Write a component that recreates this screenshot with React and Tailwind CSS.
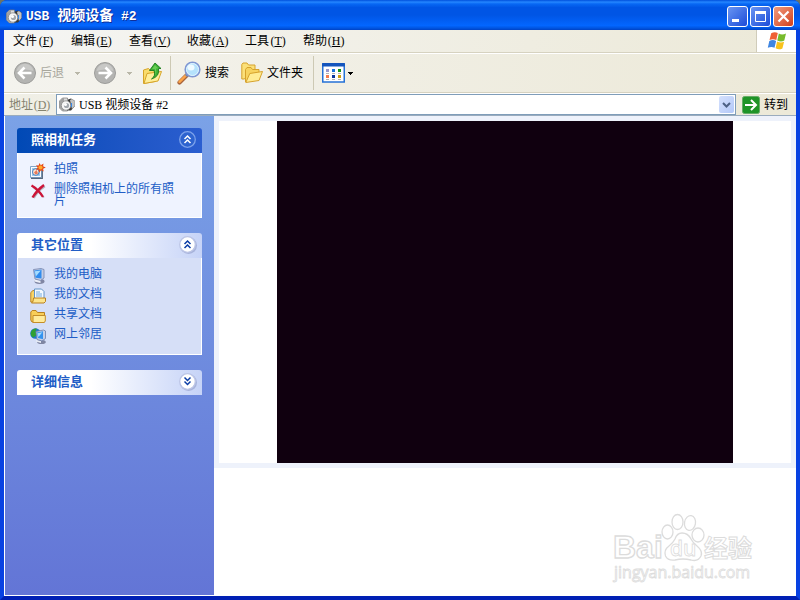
import React from "react";

const MENUS = [
  ["文件", "F"],
  ["编辑", "E"],
  ["查看", "V"],
  ["收藏", "A"],
  ["工具", "T"],
  ["帮助", "H"],
];

function CameraIcon() {
  return (
    <svg width="16" height="16" viewBox="0 0 16 16" aria-hidden="true" className="shrink-0">
      <path d="M.5 4l3-3h5v13h-5l-3-3z" fill="#dcdcdc" stroke="#777" strokeWidth="0.7" />
      <path d="M.8 4l2.700-3H5v13H3.500l-2.700-3z" fill="#a2a2a2" />
      <path d="M9 2.500l3-1 3.500 2v6l-3.500 4H8z" fill="#3c3c3c" />
      <path d="M11 3l2-1 2.500 2v5L13 12z" fill="#c4c4c4" />
      <circle cx="7" cy="8.500" r="4.700" fill="#f6f6f6" stroke="#888" strokeWidth="0.8" />
      <circle cx="7.500" cy="8.500" r="2.600" fill="#a3a8ae" />
      <circle cx="6.500" cy="7.500" r="1.500" fill="#fff" />
      <path d="M12 6h1v4h-1z" fill="#3787e8" />
    </svg>
  );
}

function CircleArrow({ flip }) {
  return (
    <svg width="22" height="22" viewBox="0 0 22 22" aria-hidden="true" className="shrink-0">
      <circle cx="11" cy="11" r="10.5" fill="#b4b4b2" stroke="#9c9c9a" />
      <path d="M2.5 9a8.6 8.6 0 0 1 17 0q-8.5-3-17 0z" fill="#c8c8c6" />
      <path
        d={flip ? "M4.500 11h12M11.5 5.500l5.500 5.500-5.500 5.500" : "M17.500 11H5.500M10.5 5.500L5 11l5.500 5.500"}
        fill="none" stroke="#fff" strokeWidth="2.600"
      />
    </svg>
  );
}

function UpFolderIcon() {
  return (
    <svg width="22" height="24" viewBox="0 0 22 24" aria-hidden="true" className="shrink-0">
      <path d="M1.500 9l5-1.500L8 9l5-1v12.500l-11.500 2z" fill="#f9dc6c" stroke="#d6a428" />
      <path d="M5 12.500l14.500-2L16 20 2 22.500z" fill="#ffee9a" stroke="#d6a428" />
      <path d="M9.500 18q4.500-3 2.500-8.500H7.500L13 2l6 5.500h-2.500q1.500 8-7 10.500z" fill="#3cb034" stroke="#1c7d1c" strokeWidth="0.9" />
      <path d="M13 4l3.500 3.500h-2.500q1 4-.5 7 0-4-.8-6.500H10z" fill="#69ce55" />
    </svg>
  );
}

function SearchIcon() {
  return (
    <svg width="24" height="24" viewBox="0 0 24 24" aria-hidden="true" className="shrink-0">
      <path d="M2.500 21.500l7.500-7.500" stroke="#a8643c" strokeWidth="4.200" strokeLinecap="round" />
      <path d="M2.500 20.800l6.500-6.500" stroke="#fba44a" strokeWidth="2.400" strokeLinecap="round" />
      <path d="M9 15l2-2" stroke="#6f86b0" strokeWidth="3" />
      <circle cx="15.500" cy="8.500" r="7.300" fill="#b5e2fc" stroke="#8097d2" strokeWidth="1.600" />
      <circle cx="15.500" cy="8.500" r="6" fill="none" stroke="#dff4ff" />
      <ellipse cx="14" cy="6.500" rx="3.500" ry="3" fill="#effaff" />
    </svg>
  );
}

function FoldersIcon() {
  return (
    <svg width="22" height="22" viewBox="0 0 22 22" aria-hidden="true" className="shrink-0">
      <path d="M.8 17V2.500l1.200-1.500h4l1.500 2h6.500v9l-11 5z" fill="#fbe07a" stroke="#d6a22c" />
      <path d="M4.500 20V7.500L6 5.500h4l1.500 2h6.500V12" fill="#f7d35f" stroke="#d6a22c" />
      <path d="M4.800 20.500l4-9 12.700-2L18 18.500z" fill="#ffec94" stroke="#d6a22c" />
    </svg>
  );
}

function ViewsIcon() {
  return (
    <svg width="24" height="20" viewBox="0 0 24 20" aria-hidden="true" className="shrink-0">
      <rect x="0.750" y="1" width="21.500" height="18" fill="#fff" stroke="#2471d6" strokeWidth="1.500" />
      <rect x="0" y="0" width="23" height="3.500" rx="1" fill="#1455bd" />
      <path d="M4 6h3v3H4z" fill="#9a97cc" />
      <path d="M10 6h3v3h-3z" fill="#1672dc" />
      <path d="M16 6h3v3h-3z" fill="#14921a" />
      <path d="M4 12h3v3H4z" fill="#f57b4d" />
      <path d="M10 12h3v3h-3z" fill="#0a349c" />
      <path d="M16 12h3v3h-3z" fill="#cf9d10" />
      <path d="M4 10.500h3m3 0h3m3 0h3M4 16.500h3m3 0h3m3 0h3" stroke="#b4b4b4" />
    </svg>
  );
}

function Caret({ color }) {
  return (
    <svg width="5" height="3" viewBox="0 0 5 3" aria-hidden="true" shapeRendering="crispEdges">
      <path d="M0 0h5v1H0zM1 1h3v1H1zM2 2h1v1H2z" fill={color} />
    </svg>
  );
}

function WindowsLogo() {
  return (
    <svg width="20" height="20" viewBox="0 0 20 20" aria-hidden="true">
      <path d="M4.200 2.200q3.500-2 6.600-.2L9.300 9Q6 7.300 2.500 9z" fill="#ef6034" />
      <path d="M11.800 2.600q3.200 1.800 7.200 0L17.300 9.600q-3.500 1.800-7-.2z" fill="#77bb2c" />
      <path d="M2.300 10q3.500-1.800 6.800 0L7.500 16.800q-3-1.700-6.700 0z" fill="#3f86e2" />
      <path d="M10.100 10.500q3.500 1.900 7 .2l-1.700 6.800q-3.300 1.800-6.800-.2z" fill="#f8c21c" />
    </svg>
  );
}

function PhotoIcon() {
  return (
    <svg width="16" height="16" viewBox="0 0 16 16" aria-hidden="true" className="shrink-0">
      <path d="M.5 3.500h11v11H.5z" fill="#fbfdff" stroke="#7fa4c8" />
      <path d="M1 15.300h11.300V6" fill="none" stroke="#56687e" strokeWidth="1.300" />
      <path d="M2 5h8v8H2z" fill="#9ccaf0" />
      <circle cx="5.800" cy="9" r="3.300" fill="#fbe3d2" stroke="#2b6fb5" strokeWidth="0.800" />
      <path d="M4 9.500L6.500 7 8 10.500l-2.500 1z" fill="#ea7b58" />
      <path d="M9.500 0l1.300 2.200L13.500.5l-.4 2.800 2.700 1.200-2.700 1.200.6 2.800-2.600-1.300L9.200 9.500 8.400 6.600 5.800 6.800l1.800-2.300L6 2.200l2.600.3z" fill="#e64a18" />
      <circle cx="10.500" cy="4.500" r="2.100" fill="#ffa92c" />
    </svg>
  );
}

function DeleteIcon() {
  return (
    <svg width="16" height="16" viewBox="0 0 16 16" aria-hidden="true" className="shrink-0">
      <path d="M3 4q6 4 11 10.500M15 3.500Q8 8 4 15" fill="none" stroke="#b3b3c0" strokeWidth="1.600" />
      <path d="M1.500 2.500Q8 6 13 14M14 2Q7 7 2.500 14.500" fill="none" stroke="#cc1438" strokeWidth="2.300" />
    </svg>
  );
}

function ComputerIcon() {
  return (
    <svg width="16" height="16" viewBox="0 0 16 16" aria-hidden="true" className="shrink-0">
      <ellipse cx="9.500" cy="13.500" rx="5" ry="2.400" fill="#8187a4" />
      <path d="M4.500 11.500l6 .5v3l-6-1.500z" fill="#eceff7" />
      <path d="M3.500 1.500L11 .5l3 1v8.500l-3.500 2.500-5.500-1.500z" fill="#c2cce4" stroke="#7483ac" strokeWidth="0.800" />
      <path d="M4.200 2.500l7.300-1v9l-6-.8z" fill="#2f8bee" />
      <path d="M4.800 3.200l6-.8-5 6z" fill="#a5dcff" />
    </svg>
  );
}

function DocumentsIcon() {
  return (
    <svg width="16" height="16" viewBox="0 0 16 16" aria-hidden="true" className="shrink-0">
      <path d="M.8 14V4.500L3 2.500h3V14z" fill="#f9d466" stroke="#bd8726" />
      <path d="M4.500 1h7l2.500 2.500v8H4.500z" fill="#f4f9ff" stroke="#6394c6" />
      <path d="M6 4h4M6 6h6M6 8h6" stroke="#72aadd" />
      <path d="M1.500 15q2-1 2-5h12v3.500L14 15z" fill="#fde58c" stroke="#b9801f" />
    </svg>
  );
}

function FolderIcon() {
  return (
    <svg width="16" height="16" viewBox="0 0 16 16" aria-hidden="true" className="shrink-0">
      <path d="M.8 12V4l1.400-1.500H6L7.500 4.500H14.500V14H2z" fill="#f8ce58" stroke="#b9801f" />
      <path d="M3 14V7.500h12.300v5.500l-1 1.500H3z" fill="#ffeb9b" stroke="#c48d29" />
    </svg>
  );
}

function NetworkIcon() {
  return (
    <svg width="16" height="16" viewBox="0 0 16 16" aria-hidden="true" className="shrink-0">
      <circle cx="5.500" cy="5.500" r="5.300" fill="#1f77cf" />
      <path d="M.8 4.500q1.500-4.500 6-4L5.500 3.500l1 3.500-3 2.500Q.3 8.500.8 4.500z" fill="#2fa034" />
      <ellipse cx="11.500" cy="14" rx="4.300" ry="2" fill="#7f86a2" />
      <path d="M6 12l5 1v2l-5-1.500z" fill="#e8ecf5" />
      <path d="M6 3.500L13.500 2l2 1v7.500L12 13l-5-1.500z" fill="#c5d0e8" stroke="#6c7da8" strokeWidth="0.800" />
      <path d="M6.800 4.500l6.200-1.200v8L8 10z" fill="#3492ee" />
      <path d="M7.300 5.200l5-1L8.500 9z" fill="#a5dcff" />
    </svg>
  );
}

function Chevrons({ down, dark }) {
  return (
    <svg width="20" height="20" viewBox="0 0 20 20" aria-hidden="true">
      {!dark && <circle cx="10.500" cy="10.500" r="8.500" fill="#8f9bc8" opacity="0.6" />}
      <circle
        cx="9.500" cy="9.500" r="7.800"
        fill={dark ? "#2d63cf" : "#fff"}
        stroke={dark ? "#7ba1ea" : "#bcc5e6"}
        strokeWidth="1.300"
      />
      <path
        d={down ? "M6.500 5.500l3 3 3-3M6.500 9.500l3 3 3-3" : "M6.500 9l3-3 3 3M6.500 13l3-3 3 3"}
        fill="none" stroke={dark ? "#fff" : "#0a3ca5"} strokeWidth="1.500"
      />
    </svg>
  );
}

function Panel({ title, primary, collapsed, items }) {
  return (
    <section>
      <h2>
        <button
          aria-expanded={!collapsed}
          className={
            "flex h-[25px] w-full items-center justify-between rounded-t-[3px] pr-1 pb-px pl-3.5 text-[13px] font-bold " +
            (primary
              ? "bg-linear-to-r from-[#0049b5] to-[#2b5ed0] text-white"
              : "bg-linear-to-r from-white from-40% to-[#c6d3f7] text-[#215dc6]")
          }
        >
          <span>{title}</span>
          <Chevrons dark={primary} down={collapsed} />
        </button>
      </h2>
      {!collapsed && (
        <ul
          className={
            "border border-t-0 border-white pt-1.5 pr-6 pb-2.5 pl-3 " +
            (primary ? "bg-[#eff3ff]" : "bg-[#d6dff7]")
          }
        >
          {items.map(([label, Icon]) => (
            <li key={label}>
              <a href="#" className="flex min-h-5 items-start gap-2 text-[12px] leading-3 text-[#215dc6]">
                <span className="h-5 pt-1"><Icon /></span>
                <span className="pt-1">{label}</span>
              </a>
            </li>
          ))}
        </ul>
      )}
    </section>
  );
}

function Watermark() {
  return (
    <svg
      width="152" height="74" viewBox="0 0 152 74" role="img" aria-label="Baidu"
      className="absolute right-[35px] bottom-[10px]"
      fill="#fff" stroke="#dcdcdc" strokeWidth="1.300"
    >
      <ellipse cx="58.500" cy="21" rx="5.500" ry="7" />
      <ellipse cx="68.500" cy="11" rx="5.500" ry="7.500" />
      <ellipse cx="81" cy="12" rx="5.500" ry="7.500" transform="rotate(10 81 12)" />
      <ellipse cx="89" cy="24" rx="6" ry="7" />
      <path d="M73 22q6 0 9 6 2 4 6 7 6 5 4 10-3 6-10 4-8-2-16 0-7 1-9.500-4-2-6 3.500-10 4-3 6-7 2-6 7-6z" />
      <g className="font-['Liberation_Sans','Noto_Sans_CJK_SC',sans-serif]">
        <text x="4" y="47" fontSize="32" fontWeight="700">Bai</text>
        <text x="95" y="46" fontSize="24" fontWeight="700" strokeWidth="1">经验</text>
      </g>
      <g className="font-['Open_Sans','Noto_Sans',sans-serif]" strokeWidth="0.800">
        <text x="61" y="45" fontSize="21" fontWeight="600">du</text>
        <text x="5" y="67" fontSize="16">jingyan.baidu.com</text>
      </g>
    </svg>
  );
}

const windowButton =
  "flex size-[21px] items-center justify-center rounded-[3px] border border-white bg-linear-to-br ";

export default function App() {
  return (
    <div className="bg-[#6d7465] font-['Liberation_Serif','Noto_Sans_CJK_SC',sans-serif] text-[12px] whitespace-nowrap text-black">
      <div className="flex min-h-screen flex-col overflow-hidden rounded-t-[7px] bg-[#0038d8]">
        <header className="flex h-[30px] items-center bg-[linear-gradient(#0050dc_0%,#2586ff_7%,#0868f4_13%,#0055e5_25%,#0055e5_50%,#0366ff_85%,#0054e0_94%,#0042c4_100%)] pt-[3px] pr-1.5 pl-1.5">
          <CameraIcon />
          <h1 className="ml-1 flex-1 font-['Liberation_Mono','Noto_Sans_CJK_SC',monospace] text-[13px] font-bold text-white [text-shadow:1px_1px_#10309a]">
            USB <span className="text-[14px]">视频设备</span> #2
          </h1>
          <div className="flex gap-0.5">
            <button aria-label="最小化" className={windowButton + "from-[#6a94f2] to-[#1d49d8]"}>
              <svg width="19" height="19" viewBox="0 0 19 19"><path d="M4 12h7v3H4z" fill="#fff" /></svg>
            </button>
            <button aria-label="最大化" className={windowButton + "from-[#6a94f2] to-[#1d49d8]"}>
              <svg width="19" height="19" viewBox="0 0 19 19">
                <path d="M4.500 5.500h10v9h-10z" fill="none" stroke="#fff" />
                <path d="M4 4h11v3H4z" fill="#fff" />
              </svg>
            </button>
            <button aria-label="关闭" className={windowButton + "from-[#f09a7c] to-[#d03c14]"}>
              <svg width="19" height="19" viewBox="0 0 19 19">
                <path d="M4.500 4.500l10 10M14.500 4.500l-10 10" stroke="#fff" strokeWidth="2.200" />
              </svg>
            </button>
          </div>
        </header>

        <div className="flex flex-1 flex-col border-x-4 border-b-4 border-x-[#0842e2] border-b-[#0020b4]">
          <nav className="flex h-[23px] border-b border-[#d6d2c0] bg-linear-to-r from-[#f5f5f3] to-[#ece9d8]">
            <div className="flex flex-1 items-center pl-[1px]">
              {MENUS.map(([label, key]) => (
                <button key={key} className="flex items-center px-2">
                  {label}
                  <span className="w-[18px] text-center">
                    (<u className="underline-offset-1">{key}</u>)
                  </span>
                </button>
              ))}
            </div>
            <div className="flex w-10 items-center justify-center border-l border-[#d0ccba] bg-white">
              <WindowsLogo />
            </div>
          </nav>

          <div role="toolbar" className="flex h-10 items-center border-t border-b border-t-white border-b-[#d6d2c0] bg-linear-to-r from-[#f4f3ee] to-[#ece9d8] pl-2.5">
            <button className="flex items-center gap-1 text-[#a7a69c]"><CircleArrow />后退</button>
            <button aria-label="后退记录" className="flex w-[30px] justify-center pr-1"><Caret color="#b9b7a8" /></button>
            <button aria-label="前进"><CircleArrow flip /></button>
            <button aria-label="前进记录" className="flex w-[26px] justify-center"><Caret color="#b9b7a8" /></button>
            <button aria-label="向上"><UpFolderIcon /></button>
            <div className="mx-1.5 h-[34px] w-px bg-[#cdc9b4]" />
            <button className="flex items-center gap-1"><SearchIcon />搜索</button>
            <button className="ml-3 flex items-center gap-1"><FoldersIcon />文件夹</button>
            <div className="mr-2 ml-2.5 h-[34px] w-px bg-[#cdc9b4]" />
            <button aria-label="查看方式" className="flex items-center gap-0.5"><ViewsIcon /><Caret color="#000" /></button>
          </div>

          <div className="flex h-[23px] items-center border-t border-b border-t-white border-b-[#9aacbe] bg-linear-to-r from-[#f0efe6] to-[#ece9d8] pr-2 pl-[5px]">
            <label htmlFor="address" className="flex w-[47px] items-center text-[#85836f]">
              地址
              <span className="w-[18px] text-center">(<u className="underline-offset-1">D</u>)</span>
            </label>
            <div className="flex h-[21px] flex-1 items-center border border-[#7f9db9] bg-white pr-px pl-0.5">
              <CameraIcon />
              <div className="grid h-full flex-1 items-center">
                <select id="address" className="col-start-1 row-start-1 h-full w-full appearance-none bg-transparent pl-1 outline-none">
                  <option>USB 视频设备 #2</option>
                </select>
                <span className="pointer-events-none col-start-1 row-start-1 flex h-[17px] w-[15px] items-center justify-center justify-self-end rounded-[2px] bg-linear-to-br from-[#d5e1fd] to-[#b3c8f8]">
                  <svg width="9" height="6" viewBox="0 0 9 6"><path d="M1 1l3.500 3.500L8 1" fill="none" stroke="#4d6185" strokeWidth="2" /></svg>
                </span>
              </div>
            </div>
            <button className="ml-1.5 flex items-center gap-1">
              <svg width="18" height="18" viewBox="0 0 18 18" aria-hidden="true">
                <rect x="0.500" y="0.500" width="17" height="17" rx="2" fill="#1f9427" stroke="#65ac67" />
                <path d="M3 9h11M9 4l5 5-5 5" fill="none" stroke="#fff" strokeWidth="2" />
              </svg>
              转到
            </button>
          </div>

          <div className="flex flex-1 border-b border-l border-white bg-white">
            <aside className="flex w-[209px] shrink-0 flex-col gap-[15px] bg-linear-to-b from-[#7ba2e7] to-[#6375d6] px-3 pt-3 whitespace-normal">
              <Panel
                title="照相机任务"
                primary
                items={[["拍照", PhotoIcon], ["删除照相机上的所有照片", DeleteIcon]]}
              />
              <Panel
                title="其它位置"
                items={[
                  ["我的电脑", ComputerIcon],
                  ["我的文档", DocumentsIcon],
                  ["共享文档", FolderIcon],
                  ["网上邻居", NetworkIcon],
                ]}
              />
              <Panel title="详细信息" collapsed items={[]} />
            </aside>
            <main className="relative min-w-0 flex-1">
              <div className="border-5 border-[#eef2fb] bg-white">
                <div className="mx-auto aspect-[4/3] w-[456px] max-w-full bg-[#10000f]" />
              </div>
              <Watermark />
            </main>
          </div>
        </div>
      </div>
    </div>
  );
}
